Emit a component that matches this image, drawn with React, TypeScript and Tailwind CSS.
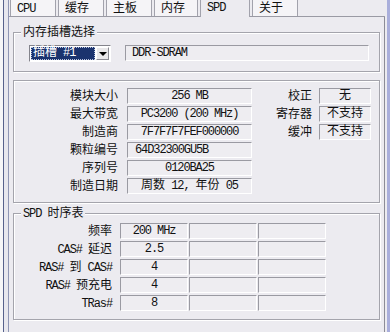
import clsx from 'clsx';
import type { ReactNode } from 'react';

const CJK = /([\u2E80-\u9FFF\uFF00-\uFFEF]+)/;

// CJK runs at 12px, ASCII runs squeezed so they sit like a half-width bitmap font
function Txt({ s }: { s: string }) {
  return (
    <>
      {s
        .split(CJK)
        .filter(Boolean)
        .map((p, i) =>
          CJK.test(p) ? (
            <span key={i} className="text-[12px]">
              {p}
            </span>
          ) : (
            <span key={i} className="text-[12px] tracking-[-1.1px] whitespace-pre">
              {p}
            </span>
          )
        )}
    </>
  );
}

const sunken =
  'border border-t-[#9a9aa2] border-l-[#9a9aa2] border-b-white border-r-white bg-[#eeedf1]';

function Field({ value, className }: { value: string; className?: string }) {
  return (
    <div className={clsx('h-[16px] flex items-center leading-[14px]', sunken, className)}>
      <Txt s={value} />
    </div>
  );
}

function Group({ title, className, children }: { title?: string; className?: string; children: ReactNode }) {
  return (
    <div
      className={clsx(
        'relative ml-[4px] w-[367px] border border-[#a4a4ac] shadow-[inset_1px_1px_0_#fff,1px_1px_0_#fff]',
        className
      )}
    >
      {title && (
        <span className="absolute left-[7px] -top-[8px] px-[2px] h-[15px] leading-[15px] bg-[#ecebf0] whitespace-nowrap">
          <Txt s={title} />
        </span>
      )}
      {children}
    </div>
  );
}

const tabs = ['CPU', '缓存', '主板', '内存', 'SPD', '关于'];

const info = [
  { label: '模块大小', value: '256 MB', align: 'center' },
  { label: '最大带宽', value: 'PC3200 (200 MHz)', align: 'center' },
  { label: '制造商', value: '7F7F7F7FEF000000', align: 'center' },
  { label: '颗粒编号', value: '64D32300GU5B', align: 'left' },
  { label: '序列号', value: '0120BA25', align: 'center' },
  { label: '制造日期', value: '周数 12, 年份 05', align: 'center' },
];

const flags = [
  { label: '校正', value: '无' },
  { label: '寄存器', value: '不支持' },
  { label: '缓冲', value: '不支持' },
];

const timings = [
  { label: '频率', value: '200 MHz' },
  { label: 'CAS# 延迟', value: '2.5' },
  { label: 'RAS# 到 CAS#', value: '4' },
  { label: 'RAS# 预充电', value: '4' },
  { label: 'TRas#', value: '8' },
];

export default function App() {
  return (
    <div className="w-[390px] h-[332px] flex overflow-hidden bg-[#ecebf0] text-[#111] font-['Liberation_Mono','Noto_Sans_CJK_SC',monospace]">
      {/* window edge on the left */}
      <div className="flex w-[8px] shrink-0">
        <div className="w-[3px] bg-[#f6f6f8]" />
        <div className="w-[1px] bg-[#56618c]" />
        <div className="w-[4px] bg-[#e7e7ee]" />
      </div>

      <div className="w-[377px] shrink-0 flex flex-col border-l border-[#8f96b4]">
        {/* tab strip */}
        <div className="h-[17px] shrink-0 flex items-end gap-[2px] pl-[1px] border-b border-[#9a9aa4]">
          {tabs.map((t) => {
            const active = t === 'SPD';
            return (
              <div
                key={t}
                className={clsx(
                  'border-x border-[#a2a2ac] pl-[6px] leading-[15px] whitespace-nowrap',
                  active
                    ? 'relative w-[50px] h-[17px] -mb-px bg-[#ecebf0] pb-[2px]'
                    : 'h-[16px] bg-[#f5f4f7] pt-[1px]',
                  t === '内存' ? 'w-[44px]' : !active && 'w-[46px]'
                )}
              >
                <Txt s={t} />
              </div>
            );
          })}
        </div>

        {/* tab panel */}
        <div className="flex-1 border-r border-[#8c8c96]">
          <Group title="内存插槽选择" className="mt-[15px] h-[40px]">
            <div className="flex gap-[14px] pl-[15px] pt-[12px]">
              <div className="w-[82px] h-[17px] flex p-[1px] bg-white border border-t-[#84848c] border-l-[#84848c] border-b-white border-r-white">
                <div className="flex-1 flex items-center bg-[#1b336e] text-white border border-dotted border-[#b9c2dc] pl-[1px] leading-[13px]">
                  <Txt s="插槽 #1" />
                </div>
                <div className="w-[13px] ml-[1px] flex items-center justify-center bg-[#e9e8ea] border border-t-white border-l-white border-b-[#8a8a92] border-r-[#8a8a92]">
                  <div className="w-0 h-0 border-x-[4px] border-x-transparent border-t-[4px] border-t-black" />
                </div>
              </div>
              <Field value="DDR-SDRAM" className="w-[244px] pl-[6px]" />
            </div>
          </Group>

          <Group className="mt-[8px] h-[123px]">
            <div className="flex pt-[7px]">
              <div className="flex flex-col gap-[2px]">
                {info.map((r) => (
                  <div key={r.label} className="flex items-center h-[16px]">
                    <div className="w-[104px] text-right whitespace-nowrap leading-[16px]">
                      <Txt s={r.label} />
                    </div>
                    <Field
                      value={r.value}
                      className={clsx('ml-[9px] w-[125px]', r.align === 'left' ? 'pl-[7px]' : 'justify-center')}
                    />
                  </div>
                ))}
              </div>
              <div className="flex flex-col gap-[2px]">
                {flags.map((r) => (
                  <div key={r.label} className="flex items-center h-[16px]">
                    <div className="w-[60px] text-right whitespace-nowrap leading-[16px]">
                      <Txt s={r.label} />
                    </div>
                    <Field value={r.value} className="ml-[7px] w-[52px] justify-center" />
                  </div>
                ))}
              </div>
            </div>
          </Group>

          <Group title="SPD 时序表" className="mt-[10px] h-[107px]">
            <div className="flex flex-col gap-[2px] pt-[9px]">
              {timings.map((r) => (
                <div key={r.label} className="flex items-center h-[16px]">
                  <div className="w-[98px] text-right whitespace-nowrap leading-[16px]">
                    <Txt s={r.label} />
                  </div>
                  <div className="ml-[8px] flex gap-[1px]">
                    <Field value={r.value} className="w-[68px] justify-center" />
                    <Field value="" className="w-[68px]" />
                    <Field value="" className="w-[68px]" />
                  </div>
                </div>
              ))}
            </div>
          </Group>
        </div>
      </div>

      {/* window edge on the right */}
      <div className="flex w-[5px] shrink-0">
        <div className="w-[2px] bg-[#ecebf0]" />
        <div className="w-[3px] bg-[#a9aedb]" />
      </div>
    </div>
  );
}
